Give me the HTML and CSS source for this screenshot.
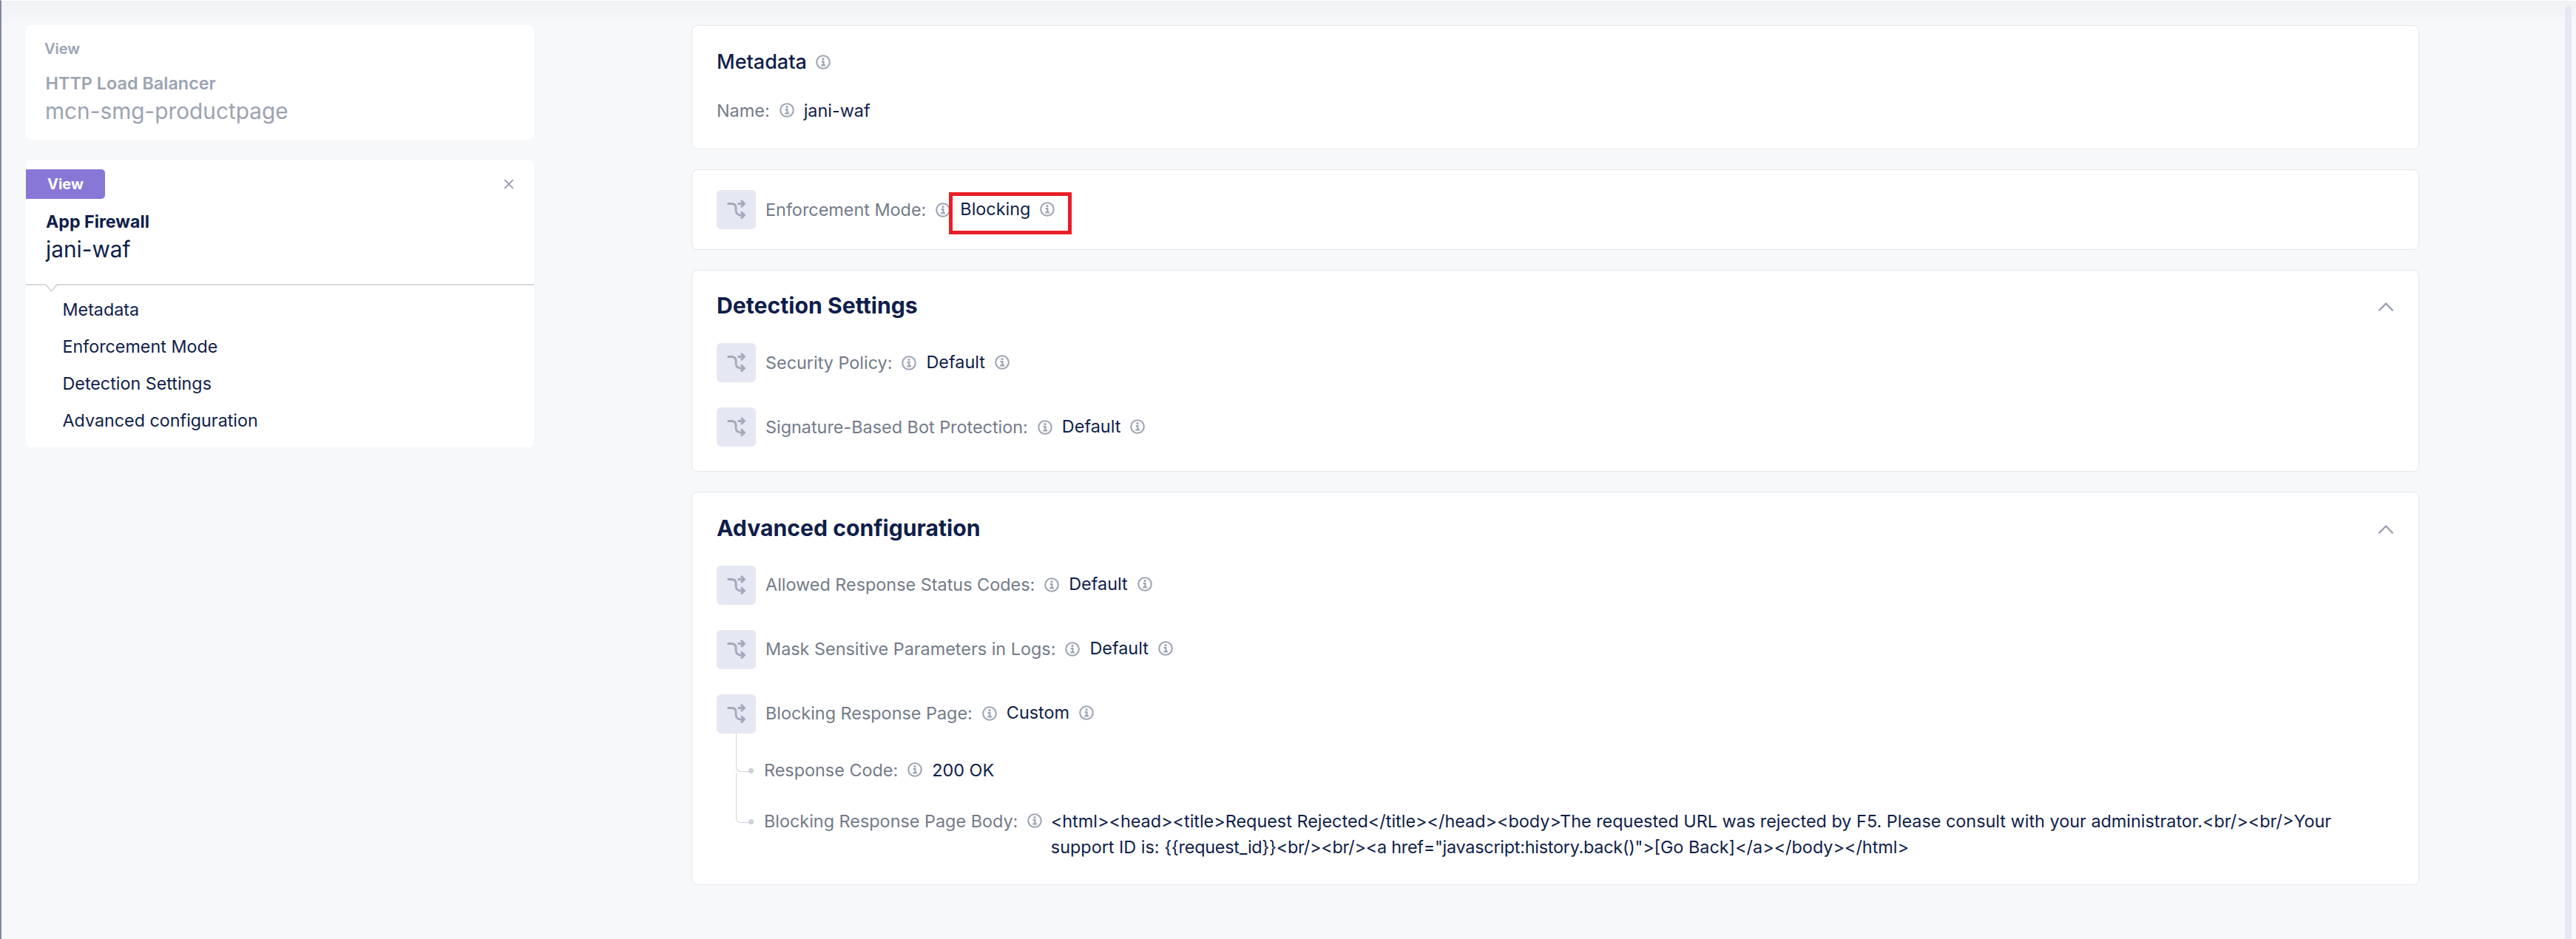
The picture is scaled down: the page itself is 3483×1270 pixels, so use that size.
FILE: index.html
```
<!DOCTYPE html>
<html lang="en">
<head>
<meta charset="utf-8">
<title>App Firewall</title>
<link rel="stylesheet" href="styles.css">
</head>
<body>
<svg class="defs" aria-hidden="true">
  <symbol id="info" viewBox="0 0 20 20"><circle cx="10" cy="10" r="8.8" fill="none" stroke="currentColor" stroke-width="2.100"/><circle cx="10" cy="5.700" r="1.600" fill="currentColor"/><path d="M7.600 9.200H10.400V14.200M7.200 14.400H13" fill="none" stroke="currentColor" stroke-width="2.200"/></symbol>
  <symbol id="split" viewBox="0 0 53 53"><path d="M14.500 18.500H20C24.500 18.500 26 20.500 26 24V27.500C26 31.500 28.500 34 32.500 34H37M28.500 18.500H37M33 14L37.500 18.500L33 23M33 29.500L37.500 34L33 38.500" fill="none" stroke="currentColor" stroke-width="2.800"/></symbol>
  <symbol id="chevron" viewBox="0 0 22 14"><path d="M1.500 12.200L11 2.500L20.500 12.200" fill="none" stroke="currentColor" stroke-width="2.200"/></symbol>
</svg>
<div class="page">
  <aside class="sidebar">
    <section class="panel panel-parent">
      <div class="tag">View</div>
      <div class="kind">HTTP Load Balancer</div>
      <div class="object">mcn-smg-productpage</div>
    </section>
    <section class="panel panel-current">
      <div class="panel-top">
        <div class="badge">View</div>
        <svg class="close" viewBox="0 0 14 14"><path d="M1.200 1.200L12.800 12.800M12.800 1.200L1.200 12.800" fill="none" stroke="currentColor" stroke-width="1.900"/></svg>
      </div>
      <div class="kind">App Firewall</div>
      <div class="object">jani-waf</div>
      <svg class="divider" viewBox="0 0 687 12"><path d="M0 1H27L34.500 10L42 1H687" fill="none" stroke="currentColor" stroke-width="1.300"/></svg>
      <nav class="nav">
        <a>Metadata</a>
        <a>Enforcement Mode</a>
        <a>Detection Settings</a>
        <a>Advanced configuration</a>
      </nav>
    </section>
  </aside>
  <main class="main">
    <section class="card card-metadata">
      <h2 class="title-line">Metadata <svg class="info"><use href="#info"/></svg></h2>
      <div class="field"><span class="label">Name:</span><svg class="info"><use href="#info"/></svg><span class="plain">jani-waf</span></div>
    </section>
    <section class="card card-mode">
      <div class="row">
        <svg class="split"><use href="#split"/></svg><span class="label">Enforcement Mode:</span><svg class="info"><use href="#info"/></svg>
        <span class="value">Blocking <svg class="info"><use href="#info"/></svg></span>
        <div class="highlight"></div>
      </div>
    </section>
    <section class="card card-detection">
      <div class="head"><h2>Detection Settings</h2><svg class="chevron"><use href="#chevron"/></svg></div>
      <div class="rows">
        <div class="row"><svg class="split"><use href="#split"/></svg><span class="label">Security Policy:</span><svg class="info"><use href="#info"/></svg><span class="value">Default <svg class="info"><use href="#info"/></svg></span></div>
        <div class="row"><svg class="split"><use href="#split"/></svg><span class="label">Signature-Based Bot Protection:</span><svg class="info"><use href="#info"/></svg><span class="value">Default <svg class="info"><use href="#info"/></svg></span></div>
      </div>
    </section>
    <section class="card card-advanced">
      <div class="head"><h2>Advanced configuration</h2><svg class="chevron"><use href="#chevron"/></svg></div>
      <div class="rows">
        <div class="row"><svg class="split"><use href="#split"/></svg><span class="label">Allowed Response Status Codes:</span><svg class="info"><use href="#info"/></svg><span class="value">Default <svg class="info"><use href="#info"/></svg></span></div>
        <div class="row"><svg class="split"><use href="#split"/></svg><span class="label">Mask Sensitive Parameters in Logs:</span><svg class="info"><use href="#info"/></svg><span class="value">Default <svg class="info"><use href="#info"/></svg></span></div>
        <div class="row"><svg class="split"><use href="#split"/></svg><span class="label">Blocking Response Page:</span><svg class="info"><use href="#info"/></svg><span class="value">Custom <svg class="info"><use href="#info"/></svg></span></div>
      </div>
      <div class="tree">
        <div class="field branch"><span class="label">Response Code:</span><svg class="info"><use href="#info"/></svg><span class="plain">200 OK</span></div>
        <div class="field branch branch-last"><span class="label">Blocking Response Page Body:</span><svg class="info"><use href="#info"/></svg><span class="plain body-text">&lt;html&gt;&lt;head&gt;&lt;title&gt;Request Rejected&lt;/title&gt;&lt;/head&gt;&lt;body&gt;The requested URL was rejected by F5. Please consult with your administrator.&lt;br/&gt;&lt;br/&gt;Your support ID is: <span class="tight">{{request_id}}&lt;br/&gt;&lt;br/&gt;&lt;a href="javascript:history.back()"&gt;</span>[Go Back]&lt;/a&gt;&lt;/body&gt;&lt;/html&gt;</span></div>
      </div>
    </section>
  </main>
  <div class="scrollbar"></div>
</div>
</body>
</html>
```
FILE: styles.css
```
* { box-sizing: border-box; }

body {
  margin: 0;
  background: #f7f8fa;
  color: #0f1e4b;
  font: 400 23.4px/36px Inter, "Liberation Sans", sans-serif;
}

h2 { margin: 0; font-size: 30.2px; font-weight: 700; line-height: 36px; }
svg { display: block; flex: none; }
.defs { position: absolute; width: 0; height: 0; }

.page {
  display: flex;
  height: 1270px;
  padding: 33.5px 6px 0 33px;
  overflow: hidden;
  border-left: 2px solid #7f86a3;
  border-top: 1px solid #fff;
  background: linear-gradient(#f1f2f4, #f7f8fa 36px);
}

.sidebar { display: flex; flex-direction: column; gap: 27px; width: 687px; margin-top: -1px; flex: none; }
.panel { background: #fff; border-radius: 7px; }
.panel-parent { height: 155.5px; padding: 22px 25px 0; color: #9ca3b2; }
.panel-current { height: 389px; padding-top: 13px; }
.tag { font-size: 20px; font-weight: 600; line-height: 20px; margin-bottom: 23px; }
.kind { font-size: 23.2px; font-weight: 700; line-height: 28px; margin-bottom: 3.5px; }
.panel-parent .kind { padding-left: 1.5px; font-size: 23.4px; font-weight: 600; }
.object { font-size: 29.8px; line-height: 40px; }
.panel-parent .object { padding-left: 1px; }
.panel-current .kind, .panel-current .object { padding-left: 27px; }
.panel-top { display: flex; justify-content: space-between; align-items: center; padding-right: 27px; margin-bottom: 16.5px; }
.badge {
  width: 107px;
  height: 40px;
  border-radius: 0 5px 5px 0;
  background: #8877d6;
  color: #fff;
  font-size: 20px;
  font-weight: 700;
  line-height: 40px;
  text-align: center;
}
.close { width: 14px; height: 14px; color: #989fad; }
.divider { width: 687px; height: 12px; margin-top: 26.5px; color: #c9cbd6; }
.nav { display: flex; flex-direction: column; margin-top: -1.5px; padding-left: 49.5px; line-height: 50px; font-size: 23.3px; }

.main { width: 2336.5px; margin: -1px 197px 0 212.5px; display: flex; flex-direction: column; gap: 27px; flex: none; }
.card { border: 1.5px solid #e4e6ec; border-radius: 8px; background: #fff; padding: 0 33.5px; }
.card-metadata { height: 168.5px; padding-top: 33px; }
.card-mode { height: 109px; padding-top: 27px; }
.card-detection { height: 273px; padding-top: 29px; }
.card-advanced { height: 531.5px; padding-top: 30px; }

.title-line { display: flex; align-items: center; gap: 12.5px; font-size: 27px; font-weight: 500; line-height: 32px; margin-bottom: 32px; }
.head { display: flex; justify-content: space-between; align-items: center; margin-bottom: 33px; }
.card-advanced .head { margin-bottom: 32.5px; }
.chevron { width: 22px; height: 14px; margin-top: 4px; color: #949bab; }
.rows { display: flex; flex-direction: column; gap: 34px; }
.row { position: relative; display: flex; align-items: center; gap: 13px; height: 53px; }
.split { width: 53px; height: 53px; border-radius: 6px; background: #e5e7f2; color: #a3a9bb; }
.label { color: #737b89; white-space: nowrap; }
.value { display: flex; align-items: center; gap: 13px; margin-bottom: 2px; }
.info { width: 20px; height: 20px; color: #9ea4b3; }
.field { display: flex; gap: 13px; }
.field .info { margin-top: 7px; }
.highlight { position: absolute; left: 314px; top: 3px; width: 166px; height: 57px; border: 5px solid #e81f27; }

.tree { display: flex; flex-direction: column; padding: 32px 0 0 25.5px; gap: 33px; }
.branch { position: relative; padding-left: 38.5px; }
.branch::before {
  content: "";
  position: absolute;
  left: 0;
  top: -32px;
  width: 16px;
  height: 51px;
  border: solid #d0d3dc;
  border-width: 0 0 1.5px 1.5px;
  border-bottom-left-radius: 6px;
}
.branch-last::before { top: -48px; height: 67px; }
.branch::after { content: ""; position: absolute; left: 17.5px; top: 15px; width: 7px; height: 7px; border-radius: 50%; background: #cdd0db; }
.branch-last { line-height: 35px; }
.body-text { width: 1745px; margin-left: -1.5px; }
.tight { letter-spacing: -0.25px; }

.scrollbar { width: 9px; margin-top: -27px; border-radius: 5px 5px 0 0; background: #e6e7f3; flex: none; }
```
